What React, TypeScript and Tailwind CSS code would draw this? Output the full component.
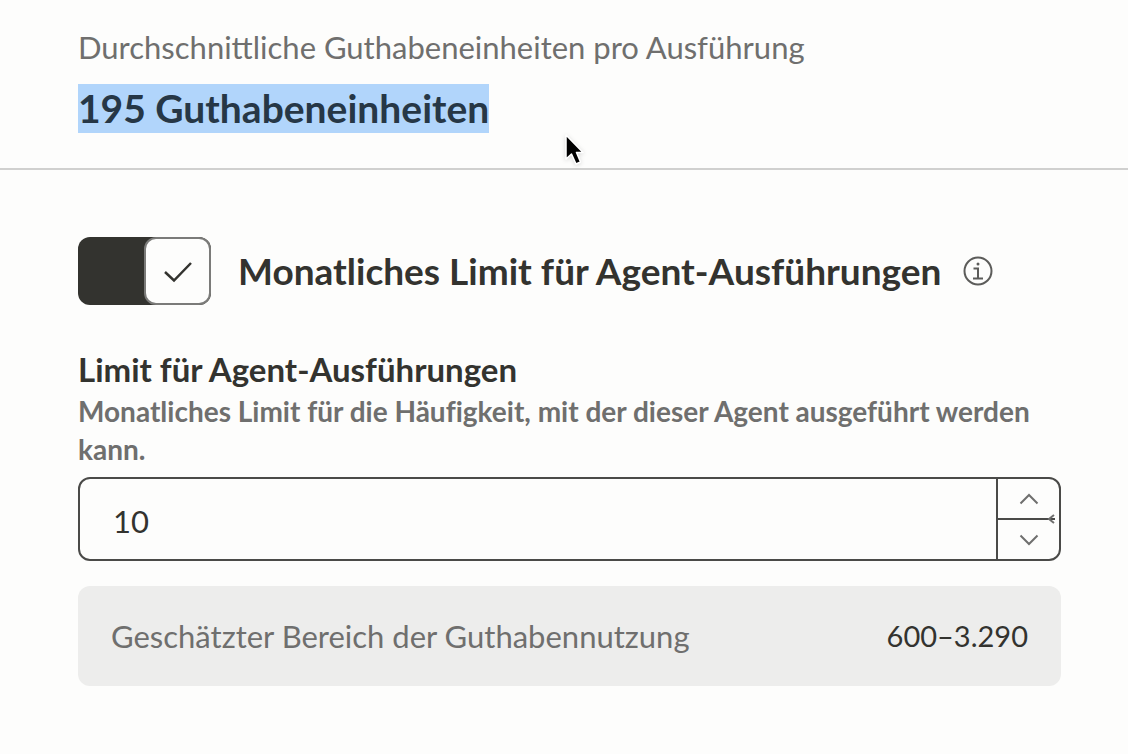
import { useState } from "react";

export default function App() {
  const [enabled, setEnabled] = useState(true);
  const [limit, setLimit] = useState(10);

  return (
    <div className="min-h-screen bg-[#fdfdfc] font-['Lato',sans-serif] text-[#33332f]">
      <section className="relative border-b-2 border-[#d0d0cf] pt-[26px] pr-[67px] pb-[35px] pl-[78px]">
        <p className="text-[31px] leading-[42px] text-[#6f6f6e]">
          Durchschnittliche Guthabeneinheiten pro Ausführung
        </p>
        <h2 className="mt-4 w-fit bg-[#b1d5fb] text-[39px] leading-[49px] font-bold text-[#263746]">
          195 Guthabeneinheiten
        </h2>
        <svg
          className="absolute top-[132px] left-[562px] h-9 w-6 drop-shadow-sm"
          viewBox="0 0 24 36"
          aria-hidden="true"
        >
          <path
            d="M4 3V27L9.500 22L14 32L18.500 30L14.500 20.500H21Z"
            fill="#000"
            stroke="#fff"
            strokeWidth="1.500"
            strokeLinejoin="round"
          />
        </svg>
      </section>

      <section className="pt-[67px] pr-[67px] pb-16 pl-[78px]">
        <div className="flex items-center">
          <label className="flex cursor-pointer items-center">
            <input
              type="checkbox"
              role="switch"
              className="peer sr-only"
              checked={enabled}
              onChange={(e) => setEnabled(e.target.checked)}
            />
            <span className="flex h-[68px] w-[133px] justify-start rounded-xl bg-[#8a8a88] peer-checked:justify-end peer-checked:bg-[#33332f]">
              <span className="flex w-[67px] items-center justify-center rounded-xl border-2 border-[#7b7b79] bg-[#fdfdfc]">
                {enabled && (
                  <svg className="h-6 w-8" viewBox="0 0 32 24" fill="none" aria-hidden="true">
                    <path d="M3 13L12 21.500L29 4" stroke="#33332f" strokeWidth="2.500" />
                  </svg>
                )}
              </span>
            </span>
            <span className="ml-[27px] text-[37px] leading-[48px] font-bold">
              Monatliches Limit für Agent-Ausführungen
            </span>
          </label>
          <button type="button" aria-label="Mehr Informationen" className="ml-[22px]">
            <svg className="size-[30px]" viewBox="0 0 30 30" fill="none" stroke="#5c5c5a" strokeWidth="2">
              <circle cx="15" cy="15" r="13.500" />
              <path d="M10.500 12.500H15V22.500M10 22.500H20" />
              <circle cx="15" cy="8" r="1.500" fill="#5c5c5a" stroke="none" />
            </svg>
          </button>
        </div>

        <label htmlFor="limit" className="mt-[45px] block text-[33px] leading-[38px] font-bold">
          Limit für Agent-Ausführungen
        </label>
        <p
          id="limit-help"
          className="mt-1 text-[28px] leading-[38px] font-bold text-[#6f6f6e] [font-variant-ligatures:none]"
        >
          Monatliches Limit für die Häufigkeit, mit der dieser Agent ausgeführt werden kann.
        </p>

        <div className="mt-[9px] flex h-[84px] overflow-hidden rounded-xl border-2 border-[#4a4a48]">
          <input
            id="limit"
            type="text"
            inputMode="numeric"
            aria-describedby="limit-help"
            className="min-w-0 flex-1 px-[33px] pt-1 text-[31px] outline-none"
            value={limit}
            onChange={(e) => setLimit(Number(e.target.value) || 0)}
          />
          <div className="relative flex w-[63px] flex-col border-l-2 border-[#4a4a48]">
            <button
              type="button"
              aria-label="Erhöhen"
              className="flex flex-1 items-center justify-center"
              onClick={() => setLimit(limit + 1)}
            >
              <svg className="h-3 w-5" viewBox="0 0 20 12" fill="none" stroke="#6f6f6e" strokeWidth="2">
                <path d="M1.500 10.500L10 2L18.500 10.500" />
              </svg>
            </button>
            <div className="mr-1 h-[2px] bg-[#4a4a48]" />
            <button
              type="button"
              aria-label="Verringern"
              className="flex flex-1 items-center justify-center"
              onClick={() => setLimit(Math.max(0, limit - 1))}
            >
              <svg className="h-3 w-5" viewBox="0 0 20 12" fill="none" stroke="#6f6f6e" strokeWidth="2">
                <path d="M1.500 1.500L10 10L18.500 1.500" />
              </svg>
            </button>
            <svg
              className="absolute top-[35px] right-1 h-[10px] w-2"
              viewBox="0 0 8 10"
              fill="none"
              stroke="#6f6f6e"
              strokeWidth="2"
              aria-hidden="true"
            >
              <path d="M7 1L2 5L7 9" />
            </svg>
          </div>
        </div>

        <div className="mt-[25px] flex items-center justify-between rounded-xl bg-[#ededec] px-[33px] py-[29px] leading-[42px]">
          <span className="text-[31px] text-[#6f6f6e]">Geschätzter Bereich der Guthabennutzung</span>
          <span className="text-[29px]">600–3.290</span>
        </div>
      </section>
    </div>
  );
}
